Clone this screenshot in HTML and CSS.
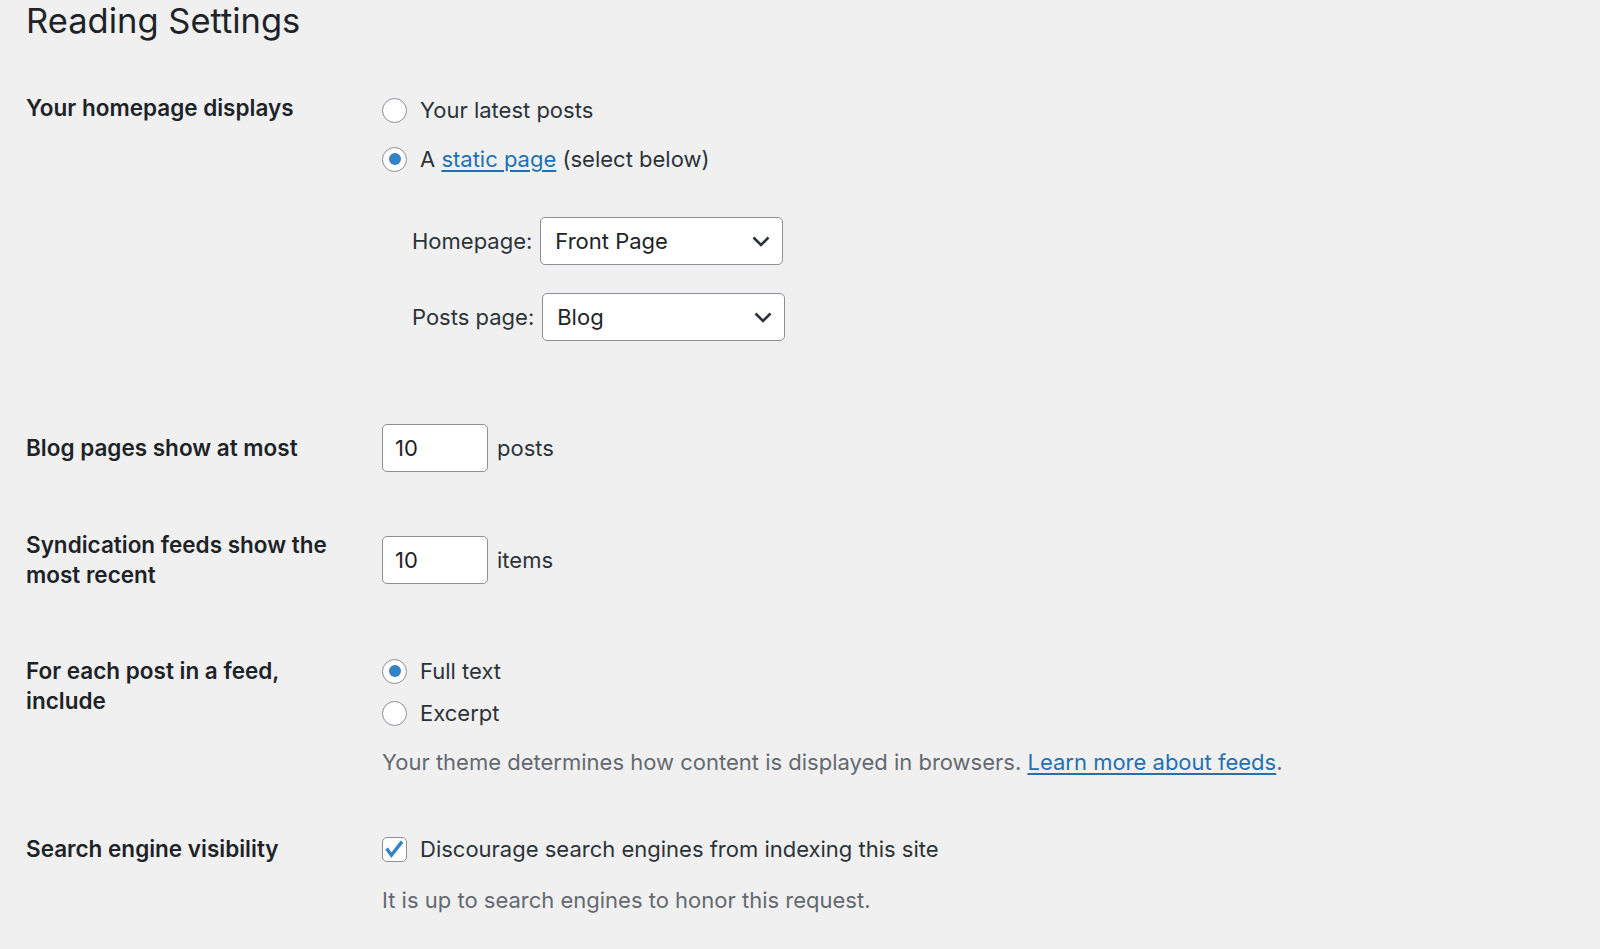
FILE: index.html
```html
<!DOCTYPE html>
<html lang="en">
<head>
<meta charset="utf-8">
<title>Reading Settings</title>
<link rel="stylesheet" href="styles.css">
</head>
<body>
<div class="wrap">
  <h1 class="title">Reading Settings</h1>

  <div class="row row-home">
    <div class="label">Your homepage displays</div>
    <div class="field field-home">
      <div class="option">
        <span class="radio"></span>
        <span class="opt-text">Your latest posts</span>
      </div>
      <div class="option option-second">
        <span class="radio radio-checked"></span>
        <span class="opt-text">A <a class="link" href="#">static page</a> (select below)</span>
      </div>
      <div class="sel-row sel-row-first">
        <span class="sel-label">Homepage:</span>
        <div class="select">
          <span class="sel-value">Front Page</span>
          <svg class="chev" width="18" height="11" viewBox="0 0 18 11"><path d="M1.5 1.5 L9 9 L16.5 1.5" fill="none" stroke="#2c3338" stroke-width="2.6"/></svg>
        </div>
      </div>
      <div class="sel-row sel-row-second">
        <span class="sel-label">Posts page:</span>
        <div class="select">
          <span class="sel-value">Blog</span>
          <svg class="chev" width="18" height="11" viewBox="0 0 18 11"><path d="M1.5 1.5 L9 9 L16.5 1.5" fill="none" stroke="#2c3338" stroke-width="2.6"/></svg>
        </div>
      </div>
    </div>
  </div>

  <div class="row row-blog">
    <div class="label">Blog pages show at most</div>
    <div class="field field-inline">
      <div class="num-input">10</div>
      <span class="opt-text">posts</span>
    </div>
  </div>

  <div class="row row-synd">
    <div class="label">Syndication feeds show the most recent</div>
    <div class="field field-inline field-offset">
      <div class="num-input">10</div>
      <span class="opt-text">items</span>
    </div>
  </div>

  <div class="row row-feed">
    <div class="label">For each post in a feed, include</div>
    <div class="field">
      <div class="option">
        <span class="radio radio-checked"></span>
        <span class="opt-text">Full text</span>
      </div>
      <div class="option option-excerpt">
        <span class="radio"></span>
        <span class="opt-text">Excerpt</span>
      </div>
      <p class="desc desc-feed">Your theme determines how content is displayed in browsers. <a class="link" href="#">Learn more about feeds</a>.</p>
    </div>
  </div>

  <div class="row row-search">
    <div class="label">Search engine visibility</div>
    <div class="field">
      <div class="option">
        <span class="checkbox">
          <svg width="23" height="23" viewBox="0 0 23 23"><path d="M3.6 10.6 L8.4 17.2 L19 3.6" fill="none" stroke="#3582c4" stroke-width="3.4"/></svg>
        </span>
        <span class="opt-text">Discourage search engines from indexing this site</span>
      </div>
      <p class="desc desc-search">It is up to search engines to honor this request.</p>
    </div>
  </div>
</div>
</body>
</html>
```

FILE: styles.css
```css
html, body {
  margin: 0;
  padding: 0;
  background: #f0f0f1;
}
body {
  font-family: Inter, "Noto Sans", "Liberation Sans", sans-serif;
  color: #2c3338;
}
.wrap {
  padding-left: 26px;
}
.title {
  margin: 0;
  font-size: 34.5px;
  line-height: 42px;
  font-weight: 400;
  color: #1d2327;
}
.row {
  display: grid;
  grid-template-columns: 356px 1fr;
  align-items: start;
}
.row-home { margin-top: 51px; }
.row-blog { margin-top: 83px; align-items: center; }
.row-synd { margin-top: 58px; }
.row-feed { margin-top: 67px; }
.row-search { margin-top: 57px; }

.label {
  font-size: 22.5px;
  line-height: 29.5px;
  font-weight: 600;
  color: #1d2327;
  padding-right: 26px;
}

.field {
  display: flex;
  flex-direction: column;
  align-items: flex-start;
}
.field-home { padding-top: 2px; }
.field-inline {
  flex-direction: row;
  align-items: center;
  gap: 9px;
}
.field-offset { margin-top: 6px; }

.option {
  display: flex;
  align-items: center;
  height: 30px;
  gap: 13px;
}
.option-second { margin-top: 19px; }
.option-excerpt { margin-top: 12px; }

.opt-text {
  font-size: 22px;
  line-height: 30px;
  color: #2c3338;
}
.link {
  color: #2271b1;
  text-decoration: underline;
  text-underline-offset: 3px;
  text-decoration-thickness: 1.5px;
}

.radio {
  width: 23px;
  height: 23px;
  border: 1px solid #8c8f94;
  border-radius: 50%;
  background: #fff;
  display: flex;
  align-items: center;
  justify-content: center;
  flex: none;
}
.radio-checked::after {
  content: "";
  width: 12px;
  height: 12px;
  border-radius: 50%;
  background: #3582c4;
}
.checkbox {
  width: 23px;
  height: 23px;
  border: 1px solid #8c8f94;
  border-radius: 5px;
  background: #fff;
  display: flex;
  flex: none;
}
.checkbox svg { display: block; }

.sel-row {
  display: flex;
  align-items: center;
  gap: 8px;
  padding-left: 30px;
}
.sel-row-first { margin-top: 43px; }
.sel-row-second { margin-top: 28px; }
.sel-label {
  font-size: 22px;
  line-height: 30px;
  color: #2c3338;
}
.select {
  box-sizing: border-box;
  width: 243px;
  height: 48px;
  border: 1px solid #8c8f94;
  border-radius: 5px;
  background: #fff;
  display: flex;
  align-items: center;
  justify-content: space-between;
  padding: 0 12px 0 14px;
}
.sel-value {
  font-size: 22px;
  line-height: 30px;
  color: #1d2327;
}
.chev { display: block; }

.num-input {
  box-sizing: border-box;
  width: 106px;
  height: 48px;
  border: 1px solid #8c8f94;
  border-radius: 5px;
  background: #fff;
  padding: 0 12px;
  font-size: 22px;
  line-height: 46px;
  color: #1d2327;
}

.desc {
  margin: 0;
  font-size: 22px;
  line-height: 30px;
  color: #646970;
}
.desc-feed { margin-top: 19px; }
.desc-search { margin-top: 21px; }
```
